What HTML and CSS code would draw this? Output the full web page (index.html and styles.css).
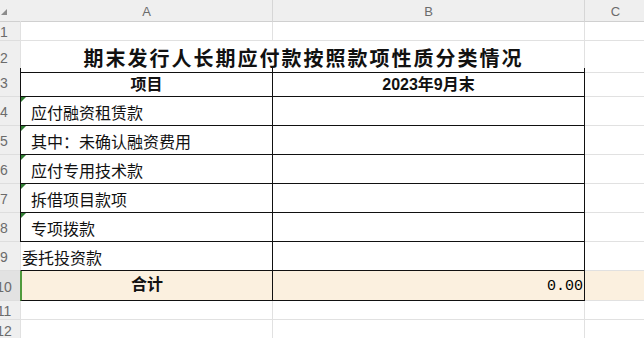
FILE: index.html
```html
<!DOCTYPE html>
<html lang="zh-CN">
<head>
  <meta charset="UTF-8">
  <title>长期应付款分类</title>
  <link rel="stylesheet" href="styles.css">
</head>
<body>
  <div class="sheet">

    <div class="row head">
      <div class="rh corner"><span class="all"></span></div>
      <div class="ch colA">A</div>
      <div class="ch">B</div>
      <div class="ch last">C</div>
    </div>

    <div class="row r1">
      <div class="rh"><span>1</span></div>
      <div class="cell colA"></div>
      <div class="cell"></div>
      <div class="cell"></div>
    </div>

    <div class="row r2">
      <div class="rh"><span>2</span></div>
      <div class="cell colA merged title">期末发行人长期应付款按照款项性质分类情况</div>
      <div class="cell"></div>
    </div>

    <div class="row">
      <div class="rh"><span>3</span></div>
      <div class="cell colA tb bold center">项目</div>
      <div class="cell tb bold center num">2023年9月末</div>
      <div class="cell"></div>
    </div>

    <div class="row">
      <div class="rh"><span>4</span></div>
      <div class="cell colA tb flag indent">应付融资租赁款</div>
      <div class="cell tb"></div>
      <div class="cell"></div>
    </div>

    <div class="row">
      <div class="rh"><span>5</span></div>
      <div class="cell colA tb flag indent">其中：未确认融资费用</div>
      <div class="cell tb"></div>
      <div class="cell"></div>
    </div>

    <div class="row">
      <div class="rh"><span>6</span></div>
      <div class="cell colA tb flag indent">应付专用技术款</div>
      <div class="cell tb"></div>
      <div class="cell"></div>
    </div>

    <div class="row">
      <div class="rh"><span>7</span></div>
      <div class="cell colA tb flag indent">拆借项目款项</div>
      <div class="cell tb"></div>
      <div class="cell"></div>
    </div>

    <div class="row">
      <div class="rh"><span>8</span></div>
      <div class="cell colA tb flag indent">专项拨款</div>
      <div class="cell tb"></div>
      <div class="cell"></div>
    </div>

    <div class="row">
      <div class="rh"><span>9</span></div>
      <div class="cell colA tb noleft">委托投资款</div>
      <div class="cell tb"></div>
      <div class="cell"></div>
    </div>

    <div class="row total">
      <div class="rh active"><span>10</span></div>
      <div class="cell colA tb picked bold center raised">合计</div>
      <div class="cell tb amount">0.00</div>
      <div class="cell"></div>
    </div>

    <div class="row r11">
      <div class="rh"><span>11</span></div>
      <div class="cell colA"></div>
      <div class="cell"></div>
      <div class="cell"></div>
    </div>

    <div class="row r12">
      <div class="rh"><span>12</span></div>
      <div class="cell colA"></div>
      <div class="cell"></div>
      <div class="cell"></div>
    </div>

  </div>
</body>
</html>
```

FILE: styles.css
```css
* {
  margin: 0;
  padding: 0;
  box-sizing: border-box;
}

body {
  background: #ffffff;
  overflow: hidden;
  font-family: "Liberation Sans", "Noto Sans CJK SC", sans-serif;
  color: #111;
}

.sheet {
  width: 644px;
}

.row {
  display: grid;
  grid-template-columns: 20px 253px 312px 1fr;
  height: 29px;
}

.row.head { height: 22px; }
.row.r1 { height: 19px; }
.row.r2 { height: 27px; }
.row.total { height: 30px; }
.row.r11 { height: 19px; }
.row.r12 { height: 20px; }

/* column letters */
.ch {
  background: #efefef;
  border-right: 1px solid #d6d6d6;
  border-bottom: 1px solid #d0d0d0;
  color: #6b6b6b;
  font-size: 13px;
  display: flex;
  align-items: center;
  justify-content: center;
  padding-top: 1px;
}
.ch.colA { border-left: 1px solid #efefef; }
.ch.last { border-right: none; padding-left: 2px; }

/* row numbers, the header is scrolled partly out of view */
.rh {
  background: #efefef;
  border-bottom: 1px solid #dedede;
  overflow: hidden;
  position: relative;
  color: #6b6b6b;
  font-size: 14px;
  display: flex;
  align-items: center;
  padding-top: 2px;
}
.rh span {
  flex: none;
  width: 32px;
  margin-left: -12px;
  text-align: center;
}
.rh.active { background: #e2e2e2; }

.rh.corner {
  border-bottom: 1px solid #d0d0d0;
}
.rh .all {
  position: absolute;
  left: 1px;
  top: 9px;
  width: 0;
  height: 0;
  border-left: 6px solid transparent;
  border-bottom: 6px solid #8c8c8c;
  margin: 0;
}

/* cells */
.cell {
  border-right: 1px solid #e1e1e1;
  border-bottom: 1px solid #e1e1e1;
  font-size: 16px;
  display: flex;
  align-items: center;
  padding-top: 2px;
  white-space: nowrap;
  position: relative;
}
.cell.colA { border-left: 1px solid #e1e1e1; }

.cell.merged {
  grid-column: 2 / 4;
}

.title {
  justify-content: center;
  font-size: 20px;
  font-weight: bold;
  letter-spacing: 2px;
  padding-left: 2px;
  border-bottom-color: #111;
}

.tb {
  border-right-color: #111;
  border-bottom-color: #111;
}
.tb.colA { border-left-color: #111; }
.tb.noleft { border-left-color: #e1e1e1; padding-left: 1px; }

.indent { padding-left: 10px; }

.bold { font-weight: bold; }
.center { justify-content: center; }
.raised { padding-top: 0; padding-bottom: 5px; }

.flag::before {
  content: "";
  position: absolute;
  left: 0;
  top: 0;
  border-top: 5px solid #2f7d32;
  border-right: 5px solid transparent;
}

.row.total .cell { background: #fbf0df; }
.cell.picked {
  border-left: 2px solid #4f9a3c;
}

.amount {
  justify-content: flex-end;
  font-family: "Liberation Mono", monospace;
  font-size: 15px;
  padding-right: 1px;
  color: #000;
}

.row .cell:last-child { border-right: none; }
```
